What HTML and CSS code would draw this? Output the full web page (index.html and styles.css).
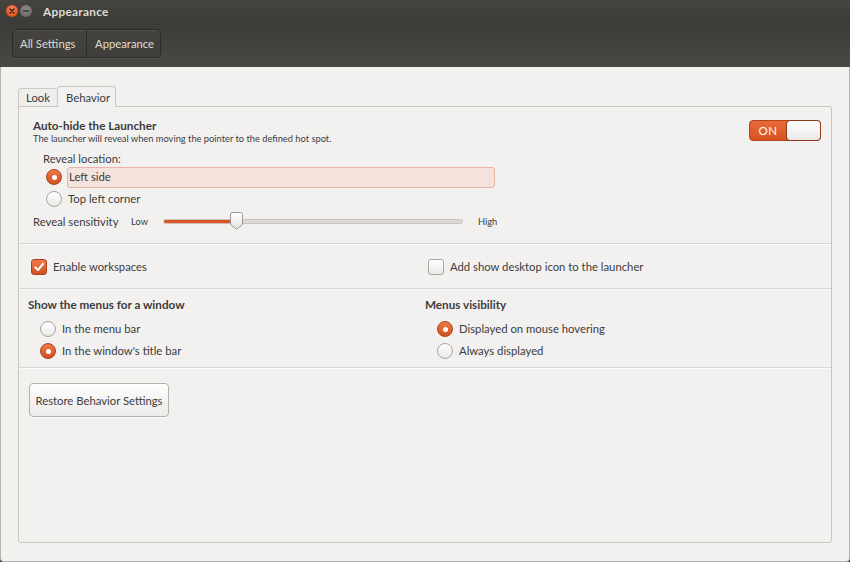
FILE: index.html
```html
<!DOCTYPE html>
<html>
<head>
<meta charset="utf-8">
<link rel="stylesheet" href="styles.css">
</head>
<body>
<div class="window">
  <div class="titlebar">
    <span class="wbtn close"><svg width="12" height="12" viewBox="0 0 12 12"><path d="M4 4 L8 8 M8 4 L4 8" stroke="#3a1c10" stroke-width="1.4" stroke-linecap="round"/></svg></span>
    <span class="wbtn mini"><svg width="12" height="12" viewBox="0 0 12 12"><path d="M3.5 6 H8.5" stroke="#3c3b37" stroke-width="1.4" stroke-linecap="round"/></svg></span>
    <span class="title">Appearance</span>
  </div>
  <div class="toolbar">
    <div class="crumbs">
      <span class="crumb">All Settings</span>
      <span class="crumb">Appearance</span>
    </div>
  </div>
  <div class="content">
    <div class="tabs">
      <span class="tab">Look</span>
      <span class="tab active">Behavior</span>
    </div>
    <div class="panel">
      <div class="section s1">
        <div class="head-row">
          <div>
            <div class="heading">Auto-hide the Launcher</div>
            <div class="sub">The launcher will reveal when moving the pointer to the defined hot spot.</div>
          </div>
          <div class="toggle"><span class="on">ON</span><span class="knob"></span></div>
        </div>
        <div class="reveal-label">Reveal location:</div>
        <div class="opt r1"><span class="radio checked"></span><span class="lbl hl">Left side</span></div>
        <div class="opt r1"><span class="radio"></span><span class="lbl">Top left corner</span></div>
        <div class="sens">
          <span class="sens-label">Reveal sensitivity</span>
          <span class="small low">Low</span>
          <span class="slider">
            <span class="track"><span class="fill"></span></span>
            <svg class="thumb" width="13" height="18" viewBox="0 0 13 18"><defs><linearGradient id="tg" x1="0" y1="0" x2="0" y2="1"><stop offset="0" stop-color="#ffffff"/><stop offset="1" stop-color="#e4e2df"/></linearGradient></defs><path d="M2.5 0.5 H10.5 Q12.5 0.5 12.5 2.5 V12.5 L6.5 17.3 L0.5 12.5 V2.5 Q0.5 0.5 2.5 0.5 Z" fill="url(#tg)" stroke="#9b9893"/></svg>
          </span>
          <span class="small high">High</span>
        </div>
      </div>
      <div class="sep"></div>
      <div class="section s2 cols">
        <div class="opt"><span class="check checked"><svg width="12" height="12" viewBox="0 0 12 12"><path d="M2.2 6.2 L5 9 L10 2.8" fill="none" stroke="#fff" stroke-width="2" stroke-linecap="round" stroke-linejoin="round"/></svg></span><span class="lbl">Enable workspaces</span></div>
        <div class="opt"><span class="check"></span><span class="lbl">Add show desktop icon to the launcher</span></div>
      </div>
      <div class="sep"></div>
      <div class="section s3 cols">
        <div class="col">
          <div class="heading">Show the menus for a window</div>
          <div class="opt r3"><span class="radio"></span><span class="lbl">In the menu bar</span></div>
          <div class="opt r3"><span class="radio checked"></span><span class="lbl">In the window's title bar</span></div>
        </div>
        <div class="col">
          <div class="heading">Menus visibility</div>
          <div class="opt r3"><span class="radio checked"></span><span class="lbl">Displayed on mouse hovering</span></div>
          <div class="opt r3"><span class="radio"></span><span class="lbl">Always displayed</span></div>
        </div>
      </div>
      <div class="sep"></div>
      <div class="section s4">
        <button class="btn">Restore Behavior Settings</button>
      </div>
    </div>
  </div>
</div>
</body>
</html>
```

FILE: styles.css
```css
* { box-sizing: border-box; }
html, body { margin: 0; padding: 0; }
body {
  width: 850px; height: 562px; overflow: hidden;
  font-family: Lato, "Liberation Sans", sans-serif;
  font-size: 11.3px; color: #3c3c3c;
  background: #3c3b37;
}
.window { width: 850px; height: 562px; display: flex; flex-direction: column; }
.titlebar {
  height: 22px; background: linear-gradient(#45443f, #3c3b37);
  display: flex; align-items: center; padding-left: 6px;
}
.wbtn {
  width: 12px; height: 12px; border-radius: 50%;
  display: flex; align-items: center; justify-content: center;
  margin-right: 2px;
}
.wbtn svg { display: block; }
.close { background: radial-gradient(circle at 50% 35%, #f4895e, #e0531f 70%, #c2441a); }
.mini { background: radial-gradient(circle at 50% 35%, #8b8a86, #6f6e6a 70%, #5c5b57); }
.title {
  margin-left: 9px; color: #dfdbd2; font-weight: bold; font-size: 11.8px;
  letter-spacing: 0.3px;
}
.toolbar {
  height: 45px; background: linear-gradient(#3c3b37, #4a4844);
  display: flex; align-items: flex-start; padding: 7px 0 0 12px;
}
.crumbs {
  display: flex; height: 29px; border: 1px solid #2c2b28; border-radius: 4px;
  box-shadow: inset 0 1px rgba(255,255,255,0.06), 0 1px rgba(255,255,255,0.07);
  background: linear-gradient(#45433f, #413f3b);
}
.crumb {
  display: flex; align-items: center; color: #dfdbd2; font-size: 11.3px;
  padding: 0 7px;
}
.crumb:first-child { width: 73px; }
.crumb + .crumb { border-left: 1px solid #2c2b28; padding: 0 6px 0 8px; width: 74px; }
.content {
  flex: 1; background: #f2f1f0;
  border: 1px solid #b6b3ae; border-top: none; border-radius: 0 0 4px 4px;
  padding: 19px 17px 18px 17px;
  display: flex; flex-direction: column;
}
.tabs { display: flex; align-items: flex-end; height: 20px; }
.tab {
  height: 18px; padding: 0 7px 0 7px; border: 1px solid #cfccc8; border-bottom: none;
  border-radius: 3px 3px 0 0; display: flex; align-items: center; color: #3c3c3c;
  background: #efeeed;
}
.tab:first-child { width: 39px; border-right: none; }
.tab.active { height: 21px; width: 59px; background: #f2f1f0; border-color: #c9c6c2; padding-left: 8px; position: relative; top: 1px; }
.panel {
  flex: 1; border: 1px solid #c9c6c2; border-radius: 0 2px 3px 3px;
  display: flex; flex-direction: column;
}
.sep { height: 2px; border-top: 1px solid #d9d7d3; border-bottom: 1px solid #fbfbfa; }
.s1 { height: 136px; padding: 11px 10px 0 14px; display: flex; flex-direction: column; }
.head-row { display: flex; justify-content: space-between; align-items: flex-start; }
.heading { font-weight: bold; line-height: 14px; font-size: 11.7px; }
.sub { font-size: 9.3px; line-height: 13px; }
.toggle {
  margin-top: 2px; width: 72px; height: 21px; display: flex;
  background: linear-gradient(#e8693a, #d9531f); border: 1px solid #b1441b; border-radius: 4px;
}
.on { color: #fff; font-size: 11.5px; width: 36px; display: flex; align-items: center; justify-content: center; letter-spacing: 0.6px; }
.knob {
  flex: 1; background: linear-gradient(#ffffff, #e9e8e6); border: 1px solid #8f3a18;
  border-radius: 4px; margin: -1px -1px -1px 0;
}
.reveal-label { margin: 7px 0 0 10px; line-height: 14px; }
.opt { display: flex; align-items: center; }
.r1 { height: 22px; margin-left: 13px; }
.lbl { margin-left: 6px; line-height: 14px; }
.hl {
  width: 428px; height: 21px; margin-left: 5px; padding-left: 1px;
  background: #f4e2dc; border: 1px solid #ebb3a2; border-radius: 3px;
  display: flex; align-items: center;
}
.radio {
  width: 16px; height: 16px; border-radius: 50%; flex: none;
  border: 1px solid #a8a5a0; background: linear-gradient(#ffffff, #ebe9e7);
  position: relative;
}
.radio.checked {
  border-color: #a9421a; background: linear-gradient(#ef7a4b, #d2501f);
}
.radio.checked::after {
  content: ""; position: absolute; left: 4.5px; top: 4.5px; width: 5px; height: 5px;
  border-radius: 50%; background: #fff;
}
.check {
  width: 16px; height: 16px; border-radius: 3px; flex: none;
  border: 1px solid #a8a5a0; background: linear-gradient(#ffffff, #ebe9e7);
  display: flex; align-items: center; justify-content: center;
}
.check.checked { border-color: #a9421a; background: linear-gradient(#ef7a4b, #d2501f); }
.check svg { display: block; }
.sens { display: flex; align-items: center; height: 20px; margin-top: 1px; }
.sens-label { width: 98px; }
.small { font-size: 9.3px; }
.low { width: 32px; }
.slider { position: relative; width: 300px; height: 18px; display: flex; align-items: center; }
.track {
  width: 300px; height: 5px; border-radius: 3px; background: #dcdad6;
  border: 1px solid #c6c3bf; position: relative; overflow: hidden;
}
.fill { position: absolute; left: 0; top: 0; bottom: 0; width: 72px; background: #dd5426; }
.thumb { position: absolute; left: 67px; top: 0; }
.high { margin-left: 15px; }
.cols { display: grid; grid-template-columns: 397px 1fr; }
.s2 { height: 43px; padding-left: 12px; align-items: center; padding-top: 0; }
.s3 { height: 77px; padding: 7px 0 0 9px; }
.s3 .heading { height: 14px; }
.r3 { height: 22px; margin-left: 12px; }
.s3 .heading + .r3 { margin-top: 7px; }
.s4 { padding: 14px 0 0 10px; }
.btn {
  width: 140px; height: 34px; font-family: inherit; font-size: 11.3px; color: #3c3c3c;
  border: 1px solid #b4b1ac; border-radius: 4px;
  background: linear-gradient(#fdfdfc, #ecebe9);
  box-shadow: 0 1px rgba(255,255,255,0.8);
  padding: 0;
}
```
